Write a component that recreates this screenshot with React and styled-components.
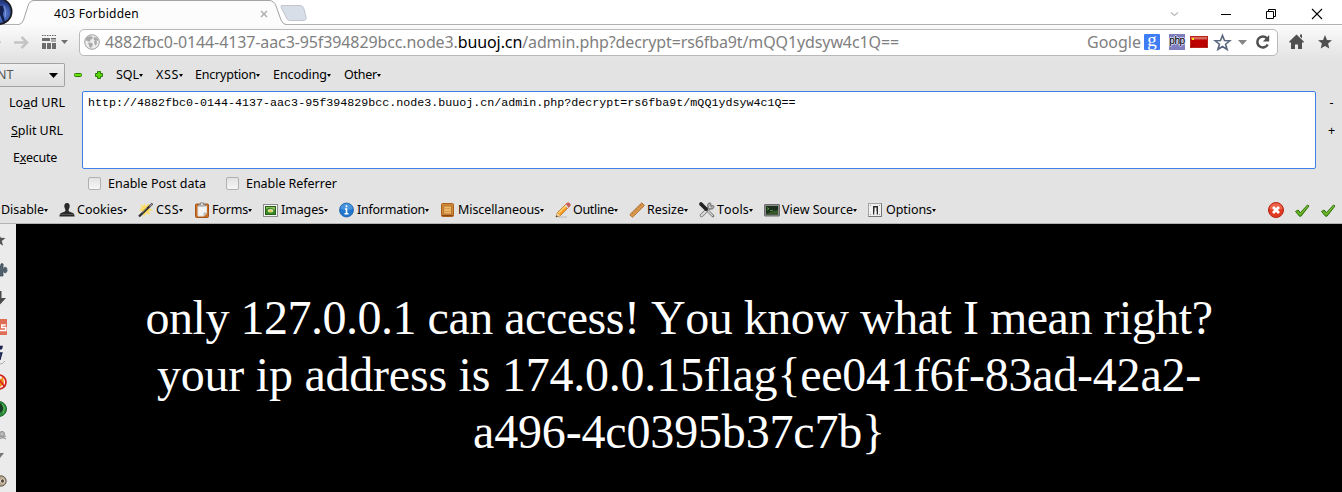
import React, { useLayoutEffect, useRef, useState } from 'react';
import styled, { createGlobalStyle } from 'styled-components';

const GlobalStyle = createGlobalStyle`
  * { box-sizing: border-box; }
  body { margin: 0; background: #e3e3e3; overflow: hidden; }
`;

const Window = styled.div`
  width: 1342px;
  height: 492px;
  display: flex;
  flex-direction: column;
  overflow: hidden;
  background: #e3e3e3;
  color: #000;
  font: 12.5px/16px 'Noto Sans', 'Open Sans', sans-serif;
  font-kerning: none;
  white-space: nowrap;
  svg { display: block; flex: none; overflow: visible; }
`;

/* Text tracked so that it fills a fixed width */
const FitBox = styled.span`
  flex: none;
  display: block;
  width: ${(p) => p.$w}px;
  white-space: pre;
`;
function Fit({ w, children }) {
  const ref = useRef(null);
  const [tracking, setTracking] = useState(0);
  useLayoutEffect(() => {
    const n = ref.current.textContent.length;
    setTracking((w - ref.current.getBoundingClientRect().width) / n);
  }, [w]);
  return (
    <FitBox $w={w}>
      <span ref={ref} style={{ letterSpacing: tracking }}>{children}</span>
    </FitBox>
  );
}

const TabStrip = styled.div`
  height: 25px;
  flex: none;
  display: flex;
  background: #fff;
  border-bottom: 1px solid #b0b0b0;
`;
const AppButton = styled.div`
  width: 19px;
  height: 24px;
`;
const Tab = styled.div`
  position: relative;
  width: 266px;
  height: 25px;
  display: flex;
  align-items: center;
  padding: 2px 0 0 35px;
  font-size: 12px;
`;
const TabShape = styled.svg`
  position: absolute;
  left: 0;
  top: 0;
`;
const TabContent = styled.div`
  position: relative;
  display: flex;
  align-items: center;
  justify-content: space-between;
  width: 214px;
`;
const WindowButtons = styled.div`
  margin-left: auto;
  display: flex;
  align-items: center;
  padding: 4px 20px 0 0;
`;
const WinButton = styled.div`
  width: 10px;
  margin-left: ${(p) => p.$gap}px;
`;

const NavBar = styled.div`
  height: 34px;
  flex: none;
  display: flex;
  align-items: center;
  background: linear-gradient(#fbfbfb, #e3e3e3);
`;
const NavIcons = styled.div`
  width: 79px;
  height: 26px;
`;
const AddressBar = styled.div`
  width: 1199px;
  height: 27px;
  display: flex;
  align-items: center;
  padding-left: 4px;
  border: 1px solid #b9b9b9;
  border-radius: 5px;
  background: #fff;
  color: #808080;
  font-size: 16px;
  line-height: 22px;
`;
const Host = styled.span`
  color: #000;
`;
const Globe = styled.div`
  margin-right: 5px;
`;
const BarTools = styled.div`
  margin-left: auto;
  display: flex;
  align-items: center;
`;
const GoogleBadge = styled.div`
  width: 16px;
  height: 16px;
  margin: 0 9px 0 3px;
  border-radius: 1px;
  background: #3f7df5;
  color: #fff;
  font: 19px/11px 'Liberation Serif', serif;
  text-align: center;
`;
const PhpBadge = styled.div`
  width: 16px;
  height: 16px;
  margin-right: 5px;
  background: #7f7fc0;
  color: #000;
  font: 10px/14px 'Liberation Sans', sans-serif;
  letter-spacing: -0.4px;
  text-align: center;
  text-shadow: 1px 0 0 #dcdcf2, -1px 0 0 #dcdcf2, 0 1px 0 #dcdcf2, 0 -1px 0 #dcdcf2;
`;
const Spaced = styled.div`
  margin-left: ${(p) => p.$gap}px;
`;

const MenuRow = styled.div`
  height: ${(p) => p.$h}px;
  flex: none;
  display: flex;
  align-items: center;
`;
const Picker = styled.div`
  width: 65px;
  height: 24px;
  display: flex;
  align-items: center;
  justify-content: space-between;
  padding-right: 6px;
  margin-right: 9px;
  border: 1px solid #a3a3a3;
  border-left: 0;
  border-radius: 0 2px 2px 0;
  background: linear-gradient(#efefef, #dedede);
  color: #555;
`;
const PickerText = styled.span`
  margin-left: -3px;
`;
const MenuItem = styled.div`
  width: ${(p) => p.$w}px;
  margin-left: ${(p) => p.$ml || 0}px;
  flex: none;
  display: flex;
  align-items: center;
`;
const Caret = styled.i`
  margin: 1px 0 0;
  border: solid transparent;
  border-width: 3px 2.5px 0;
  border-top-color: #000;
`;
const IconSlot = styled.div`
  width: 18px;
  flex: none;
`;
const SmallIcon = styled.div`
  width: ${(p) => p.$w}px;
  flex: none;
`;

const Editor = styled.div`
  height: 79px;
  flex: none;
  display: flex;
`;
const Actions = styled.div`
  width: 82px;
  padding-top: 4px;
  flex: none;
`;
const Action = styled.div`
  height: ${(p) => p.$h}px;
  padding-left: ${(p) => p.$x}px;
`;
const UrlBox = styled.div`
  width: 1234px;
  height: 78px;
  padding: 4px 5px;
  border: 1px solid #3f80e8;
  border-radius: 2px;
  background: #fff;
  font: 11.68px/14px 'Liberation Mono', monospace;
`;
const Sizers = styled.div`
  width: 26px;
  padding: 4px 0 0 12px;
`;
const Sizer = styled.div`
  height: 28px;
  width: 7px;
  text-align: center;
`;
const CheckRow = styled.div`
  height: 27px;
  flex: none;
  display: flex;
  align-items: center;
  padding-left: 88px;
`;
const Checkbox = styled.div`
  width: 13px;
  height: 13px;
  margin-right: 7px;
  border: 1px solid #b0b0b0;
  border-radius: 2px;
  background: linear-gradient(#e2e2e2, #f6f6f6);
`;
const CheckItem = styled.div`
  width: 138px;
  display: flex;
  align-items: center;
`;
const StatusIcons = styled.div`
  margin-left: auto;
  display: flex;
  align-items: center;
  gap: 10px;
  padding-right: 6px;
`;

const Body = styled.div`
  flex: 1;
  display: flex;
  min-height: 0;
  border-top: 1px solid #b4b4b4;
`;
const SideBar = styled.div`
  width: 16px;
  flex: none;
  background: #ebebeb;
  overflow: hidden;
`;
const Page = styled.main`
  flex: 1;
  background: #000;
  color: #fff;
  padding-top: 65px;
  font: 48px/57px 'Liberation Serif', 'Times New Roman', serif;
  font-kerning: none;
`;
const Line = styled.div`
  display: flex;
  justify-content: center;
`;

const Svg = ({ w = 16, h = 16, children }) => (
  <svg width={w} height={h} viewBox={`0 0 ${w} ${h}`}>{children}</svg>
);

const icons = {
  cookies: (
    <Svg>
      <path d="M8 1C5.7 1 5 2.7 5.4 5c.2 1.500 1.100 2.300 1.100 3.500L5.500 9.800 2 11c-1.300.7-1.500 2-1.500 3.500h15C15.500 13 15.300 11.700 14 11l-3.500-1.200-1-1.300c0-1.200.9-2 1.100-3.500C11 2.700 10.300 1 8 1z" fill="#292929" />
      <path d="M1.500 12.500h13" stroke="#555" />
    </Svg>
  ),
  css: (
    <Svg>
      <path d="M6 1l1.500 3L11 1.500 10.500 6l4.500 2-4 1 1 4-3.500-2-3 4-.3-5L1 8l3-2-2-4 4 2z" fill="#fcdc62" />
      <path d="M1 14.500L14.500 1.500" stroke="#303030" strokeWidth="2.400" />
      <path d="M11.500 4.500l3-3" stroke="#999" strokeWidth="1.200" />
      <path d="M4 11L9 6" stroke="#888" strokeWidth=".8" />
    </Svg>
  ),
  forms: (
    <Svg>
      <rect x="1.500" y="2" width="13" height="13.500" rx="1" fill="#c96f26" stroke="#a5551a" />
      <path d="M4 4h8.500v7L10 14H4z" fill="#f4f4f4" stroke="#ddd" />
      <path d="M12.500 11H10v3" fill="#ccc" stroke="#999" strokeWidth=".6" />
      <path d="M4.500 4V2.500h2V.8h3v1.700h2V4z" fill="#d8d8d8" stroke="#777" strokeWidth=".7" />
    </Svg>
  ),
  images: (
    <Svg>
      <rect x=".5" y="2.500" width="14" height="12" fill="#f5f5f5" stroke="#8a8a8a" />
      <rect x="2.500" y="4.500" width="10" height="8" fill="#3d8b26" stroke="#246018" />
      <path d="M3 7q4-3 9 1v-3H3z" fill="#92bf5a" />
      <ellipse cx="7.500" cy="8.800" rx="2.800" ry="1.800" fill="#e9e8b8" />
      <circle cx="7.500" cy="9" r="1.100" fill="#e4bf24" />
    </Svg>
  ),
  info: (
    <Svg>
      <circle cx="7.500" cy="8" r="7" fill="#2276cc" stroke="#15569f" strokeWidth=".7" />
      <path d="M1.500 7a6 5.500 0 0 1 12 0q-6 2-12 0z" fill="#5da5e8" opacity=".65" />
      <path d="M7.500 3.200v2M6 7h1.500v4.500M5.500 11.800h4" stroke="#fff" strokeWidth="1.600" fill="none" />
    </Svg>
  ),
  misc: (
    <Svg>
      <rect x="1.500" y="1.500" width="12" height="13" rx="1" fill="#d08a3c" stroke="#a9601d" />
      <rect x="3.800" y="4" width="7.500" height="8" fill="#edb967" stroke="#a9601d" strokeWidth=".7" />
      <path d="M5 6.500h5M5 9.500h5" stroke="#d59a50" />
      <path d="M2 13.500h11" stroke="#8c4a12" />
    </Svg>
  ),
  outline: (
    <Svg>
      <path d="M3 15h9" stroke="#bbb" />
      <path d="M1 15l1.500-4.500L12 1.200q1.800-.8 3 .8 .6 1-.2 2L5.500 13.500z" fill="#f4a02b" stroke="#b36a16" strokeWidth=".8" />
      <path d="M3.500 11L12 2.800" stroke="#ffd67a" strokeWidth="1.200" />
      <path d="M10.800 2.600L12.300 1q2-.6 2.800 1t-.4 2.300L13.300 5.500z" fill="#cc5c68" />
      <path d="M10.500 3l2.500 2.800" stroke="#d8d8d8" strokeWidth="1.300" />
      <path d="M1 15l1.400-4 2.800 2.600z" fill="#efcf9d" />
      <path d="M.8 15.300l.7-2 1.300 1.200z" fill="#333" />
    </Svg>
  ),
  resize: (
    <Svg>
      <path d="M.8 12.700L12.800.8l2.600 2.700L3.500 15.300z" fill="#dc994b" stroke="#a86a2c" strokeWidth=".9" />
      <path d="M3 10.700l1.300 1.300M5 8.700L6 9.700M7 6.700L8.300 8M9 4.700l1 1M11 2.700L12.300 4" stroke="#a86a2c" strokeWidth=".8" />
    </Svg>
  ),
  tools: (
    <Svg>
      <path d="M2.500 13.500L11 5" stroke="#777" strokeWidth="3.400" strokeLinecap="round" />
      <path d="M2.500 13.500L11 5" stroke="#e2e2e2" strokeWidth="1.800" strokeLinecap="round" />
      <path d="M14.700 3.800A3 3 0 1 1 11.500 1M11.500 1l.3 2.700 2.900.1" fill="none" stroke="#888" strokeWidth="1.500" />
      <path d="M7 7l7 7" stroke="#777" strokeWidth="2.600" strokeLinecap="round" />
      <path d="M9 9l4.800 4.800" stroke="#ddd" strokeWidth="1.200" />
      <path d="M2 2l5 5" stroke="#222" strokeWidth="3.800" strokeLinecap="round" />
    </Svg>
  ),
  source: (
    <Svg>
      <rect x=".5" y="2.500" width="15" height="11.500" rx=".5" fill="#8c8c8c" stroke="#6c6c6c" />
      <rect x="2" y="4" width="12" height="8.500" fill="#1c2f1c" />
      <path d="M2 12q6-3 12-4v4.500H2z" fill="#36582a" />
      <path d="M3 5.500l2 1.300L3 8M6 8.500h3" fill="none" stroke="#54a344" strokeWidth=".8" />
    </Svg>
  ),
  options: (
    <Svg>
      <rect x=".5" y="1.500" width="13" height="13" fill="#f0f0f0" stroke="#a2a2a2" />
      <path d="M.5 14.500h13v-13" fill="none" stroke="#777" />
      <path d="M5 12.500V4h5v8.500H8.500v-3h-2v3z" fill="#2c2c2c" />
      <rect x="6.500" y="5.500" width="2" height="7" fill="#f4f4f4" />
      <path d="M2 3.500h1M11 3.500h1M2 12.500h1M11 12.500h1" stroke="#999" />
    </Svg>
  ),
};

const encoders = [
  { label: 'SQL', text: 23, w: 40 },
  { label: 'XSS', text: 23, w: 39 },
  { label: 'Encryption', text: 61, w: 78 },
  { label: 'Encoding', text: 54, w: 71 },
  { label: 'Other', text: 33, w: 50 },
];

const devMenus = [
  { label: 'Disable', text: 43, w: 58 },
  { icon: 'cookies', label: 'Cookies', text: 46, w: 79 },
  { icon: 'css', label: 'CSS', text: 23, w: 56 },
  { icon: 'forms', label: 'Forms', text: 36, w: 69 },
  { icon: 'images', label: 'Images', text: 43, w: 76 },
  { icon: 'info', label: 'Information', text: 68, w: 101 },
  { icon: 'misc', label: 'Miscellaneous', text: 82, w: 115 },
  { icon: 'outline', label: 'Outline', text: 41, w: 74 },
  { icon: 'resize', label: 'Resize', text: 37, w: 70 },
  { icon: 'tools', label: 'Tools', text: 32, w: 65 },
  { icon: 'source', label: 'View Source', text: 71, w: 104 },
  { icon: 'options', label: 'Options', text: 46, w: 68 },
];

const Check = () => (
  <Svg>
    <path d="M1.500 9.500L4 8l2.500 2.500L13.500 3l1.500 1L7 14.200H5.500z" fill="#58a516" stroke="#32740b" strokeWidth="1" />
    <path d="M3 9.500l3 3L13.800 4" fill="none" stroke="#8bc94c" strokeWidth=".8" />
  </Svg>
);

const SideIcons = () => (
  <svg width="16" height="268" viewBox="0 0 16 268">
    <path d="M-1 9.500l1.700 4.200 4.800.2-3.700 3 1.300 4.900L-1 19z" fill="#555" />
    <path d="M-4 42h5q-.8-2.500 1-2.500T3 42v3h1.200v-1.500q2.800-1 2.800 2.500t-2.800 2.500V47H3v5H-4z" fill="#50626f" stroke="#35434d" strokeWidth=".7" />
    <path d="M-3 67h4.500v7H6l-6.500 7V67z" fill="#4a4a4a" />
    <rect x="-9" y="95" width="16" height="16" fill="#df6f54" />
    <path d="M5.800 101H1.800v2.500h4v3H0" fill="none" stroke="#fff" strokeWidth="1.500" />
    <path d="M1.500 124.500L0 125v-2.500h2zM0 129h1.800L0 135h1" stroke="#17204e" strokeWidth="1.500" fill="#17204e" />
    <path d="M0 140q3 0 5-3" stroke="#aaa" fill="none" />
    <circle cx="-1" cy="158" r="7" fill="#f5eee6" />
    <path d="M-2 154l3 1 2-3 1 8-4 3h-3z" fill="#ef8b17" />
    <circle cx="-1" cy="158" r="7" fill="none" stroke="#d31f1f" strokeWidth="1.700" />
    <path d="M-4 152l9 11" stroke="#d31f1f" strokeWidth="1.500" />
    <circle cx="-1" cy="185" r="7.500" fill="#2d8c39" stroke="#1c642a" />
    <ellipse cx="-1" cy="184" rx="4" ry="5" fill="#173c24" />
    <path d="M2 180q4 4 1 9" stroke="#65bd62" fill="none" />
    <circle cx="2" cy="210" r="2.500" fill="#bbb" stroke="#888" />
    <path d="M-1 215l7-3M0 212l6 3" stroke="#999" strokeWidth="1.300" />
    <path d="M-4 229h8l-4 5z" fill="#777" />
    <circle cx="1" cy="257" r="5.200" fill="#b5a58f" stroke="#655a4e" />
    <circle cx="2.500" cy="257" r="2.200" fill="#5b5149" stroke="#e5dac7" />
  </svg>
);

export default function App() {
  return (
    <Window>
      <GlobalStyle />
      <TabStrip>
        <AppButton>
          <svg width="19" height="24" viewBox="0 0 19 24">
            <defs>
              <radialGradient id="orb" cx=".6" cy=".6">
                <stop offset="0" stopColor="#5f85d6" />
                <stop offset=".6" stopColor="#4463b4" />
                <stop offset="1" stopColor="#233a84" />
              </radialGradient>
            </defs>
            <circle cx="-1" cy="11.500" r="13.500" fill="#1b1b22" />
            <circle cx="-1" cy="11.500" r="11.700" fill="url(#orb)" />
            <path d="M-2 5l5 1 1 4-1 4 2 8H3L0 15z" fill="#14204d" />
            <path d="M4 6q3 6 1 11" stroke="#9db8ee" fill="none" opacity=".6" />
          </svg>
        </AppButton>
        <Tab>
          <TabShape width="290" height="26" viewBox="0 0 290 26">
            <path d="M0 26V24.500Q3 24 4.500 20L9 6Q10.500.500 15 .500H250Q255 .500 257 6L262 20Q264 24.500 267 24.500V26z" fill="#fcfcfc" />
            <path d="M0 24.500Q3 24 4.500 20L9 6Q10.500.500 15 .500H250Q255 .500 257 6L262 20Q264 24.500 267 24.500" fill="none" stroke="#a3a3a3" />
            <path d="M263 5.500H281Q284 5.500 285 9L287 17Q288 20.500 284 20.500H271Q268 20.500 267 17L262 7Q261.500 5.500 263 5.500z" fill="#d8dee7" stroke="#c2c6cc" />
          </TabShape>
          <TabContent>
            <Fit w={85}>403 Forbidden</Fit>
            <Svg w={8} h={8}>
              <path d="M1 1l6 6M7 1L1 7" stroke="#aaa" strokeWidth="1.400" />
            </Svg>
          </TabContent>
        </Tab>
        <WindowButtons>
          <WinButton $gap={0}>
            <Svg w={10} h={10}><path d="M1 3.500l3.500 3 3.500-3" fill="none" stroke="#bbb" strokeWidth="1.300" /></Svg>
          </WinButton>
          <WinButton $gap={41}>
            <Svg w={10} h={10}><path d="M0 5.500h10" stroke="#000" /></Svg>
          </WinButton>
          <WinButton $gap={35}>
            <Svg w={10} h={10}><path d="M.5 2.500h7v7h-7zM2.500 2.500v-2h7v7h-2" fill="none" stroke="#000" /></Svg>
          </WinButton>
          <WinButton $gap={36}>
            <Svg w={10} h={10}><path d="M0 0l10 10M10 0L0 10" stroke="#000" strokeWidth="1.100" /></Svg>
          </WinButton>
        </WindowButtons>
      </TabStrip>

      <NavBar>
        <NavIcons>
          <svg width="79" height="26" viewBox="0 0 79 26">
            <path d="M-2 10l3 3-3 3z" fill="#aaa" />
            <path d="M14 13.500h12M21.500 8l5.500 5.500L21.500 19" fill="none" stroke="#c4c4c4" strokeWidth="2.600" />
            <path d="M42 6.500h14" stroke="#666" strokeDasharray="1.500 1" />
            <path d="M42 9h8v3h-8zM51 9h5v1.500h-5zM51 11.500h5v1h-5zM42 14h4v6h-4zM47 14h4v6h-4zM52 14h4v6h-4z" fill="#6c6c6c" />
            <path d="M61 11h7l-3.500 4z" fill="#707070" />
          </svg>
        </NavIcons>
        <AddressBar>
          <Globe>
            <Svg w={16} h={16}>
              <circle cx="8" cy="8" r="7.300" fill="#ededed" stroke="#a0a0a0" />
              <path d="M2.500 3.500L6 2l3 1-1 2-2 1 .5 1.500H4L3 6.500 1.500 7zM4 8.500l4 .5 1 1.500L7 14l-1.500-1zM10 3l3 .8 1.500 3-2-.3L13 9l-1.500 3-1.500-4 1-1.500-1.500-1z" fill="#aaa" />
            </Svg>
          </Globe>
          <Fit w={794}>
            4882fbc0-0144-4137-aac3-95f394829bcc.node3.<Host>buuoj.cn</Host>/admin.php?decrypt=rs6fba9t/mQQ1ydsyw4c1Q==
          </Fit>
          <BarTools>
            <Fit w={54}>Google</Fit>
            <GoogleBadge>g</GoogleBadge>
            <PhpBadge>php</PhpBadge>
            <Spaced $gap={0}>
              <Svg w={24} h={12}>
                <rect x=".5" y=".5" width="17" height="11" fill="#bd0000" stroke="#b8231c" />
                <path d="M1 1h16v2.500H1z" fill="#d8685c" />
                <path d="M1 11l3-3M17 11l-3-3" stroke="#930000" />
                <path d="M2 2h2v2H2z" fill="#ffe600" />
              </Svg>
            </Spaced>
            <Svg w={17} h={17}>
              <path d="M8.500 1.500l2 5 5.300.3-4.200 3.400 1.500 5.300-4.600-3-4.600 3 1.500-5.300L1.200 6.800l5.300-.3z" fill="#fff" stroke="#59667d" strokeWidth="1.600" />
            </Svg>
            <Spaced $gap={7}><Svg w={9} h={5}><path d="M0 0h9L4.500 5z" fill="#858585" /></Svg></Spaced>
            <Spaced $gap={8}>
              <Svg w={15} h={16}>
                <path d="M11.800 4.200A5.500 5.500 0 1 0 12.700 10.500" fill="none" stroke="#505050" strokeWidth="2.500" />
                <path d="M14.200 1v6.500H7.800z" fill="#505050" />
              </Svg>
            </Spaced>
            <Spaced $gap={7} />
          </BarTools>
        </AddressBar>
        <Spaced $gap={11}>
          <Svg w={15} h={16}>
            <path d="M7.500.5L15 7.700l-1 1.200L13 8.100V15H9v-4.500H6V15H2V8.100L1 8.900 0 7.700zM11 .5h2v4l-2-2z" fill="#505050" />
          </Svg>
        </Spaced>
        <Spaced $gap={14}>
          <Svg w={14} h={16}>
            <path d="M7 1l2 4.900 5 .3-3.900 3.300L11.300 14.500 7 11.900 2.700 14.500l1.200-5L0 6.200l5-.3z" fill="#505050" />
          </Svg>
        </Spaced>
      </NavBar>

      <MenuRow $h={32}>
        <Picker>
          <PickerText>NT</PickerText>
          <Svg w={9} h={5}><path d="M0 0h9L4.500 5z" fill="#000" /></Svg>
        </Picker>
        <SmallIcon $w={21}>
          <Svg w={8} h={4}><rect x=".5" y=".5" width="7" height="3" rx="1" fill="#6ee00a" stroke="#2b7d0b" /></Svg>
        </SmallIcon>
        <SmallIcon $w={21}>
          <Svg w={8} h={8}><path d="M2.500.500h3v2h2v3h-2v2h-3v-2h-2v-3h2z" fill="#5cd40a" stroke="#2b7d0b" /></Svg>
        </SmallIcon>
        {encoders.map((m) => (
          <MenuItem key={m.label} $w={m.w}>
            <Fit w={m.text}>{m.label}</Fit>
            <Caret />
          </MenuItem>
        ))}
      </MenuRow>

      <Editor>
        <Actions>
          <Action $h={28} $x={9}><Fit w={56}>Lo<u>a</u>d URL</Fit></Action>
          <Action $h={27} $x={11}><Fit w={52}><u>S</u>plit URL</Fit></Action>
          <Action $h={16} $x={13}><Fit w={44}>E<u>x</u>ecute</Fit></Action>
        </Actions>
        <UrlBox>http://4882fbc0-0144-4137-aac3-95f394829bcc.node3.buuoj.cn/admin.php?decrypt=rs6fba9t/mQQ1ydsyw4c1Q==</UrlBox>
        <Sizers>
          <Sizer>-</Sizer>
          <Sizer>+</Sizer>
        </Sizers>
      </Editor>

      <CheckRow>
        <CheckItem><Checkbox /><Fit w={98}>Enable Post data</Fit></CheckItem>
        <CheckItem><Checkbox /><Fit w={91}>Enable Referrer</Fit></CheckItem>
      </CheckRow>

      <MenuRow $h={26}>
        {devMenus.map((m) => (
          <MenuItem key={m.label} $w={m.w} $ml={m.icon ? 0 : 1}>
            {m.icon && <IconSlot>{icons[m.icon]}</IconSlot>}
            <Fit w={m.text}>{m.label}</Fit>
            <Caret />
          </MenuItem>
        ))}
        <StatusIcons>
          <Svg>
            <circle cx="8" cy="8" r="7.500" fill="#e23a22" stroke="#b52413" />
            <path d="M1.500 7a6.500 6 0 0 1 13 0q-6.500 2-13 0z" fill="#f58a70" opacity=".5" />
            <path d="M5 5l6 6M11 5l-6 6" stroke="#fff" strokeWidth="2.800" />
          </Svg>
          <Check />
          <Check />
        </StatusIcons>
      </MenuRow>

      <Body>
        <SideBar><SideIcons /></SideBar>
        <Page>
          <Line><Fit w={1067}>only 127.0.0.1 can access! You know what I mean right?</Fit></Line>
          <Line><Fit w={1044}>your ip address is 174.0.0.15flag&#123;ee041f6f-83ad-42a2-</Fit></Line>
          <Line><Fit w={412}>a496-4c0395b37c7b&#125;</Fit></Line>
        </Page>
      </Body>
    </Window>
  );
}
